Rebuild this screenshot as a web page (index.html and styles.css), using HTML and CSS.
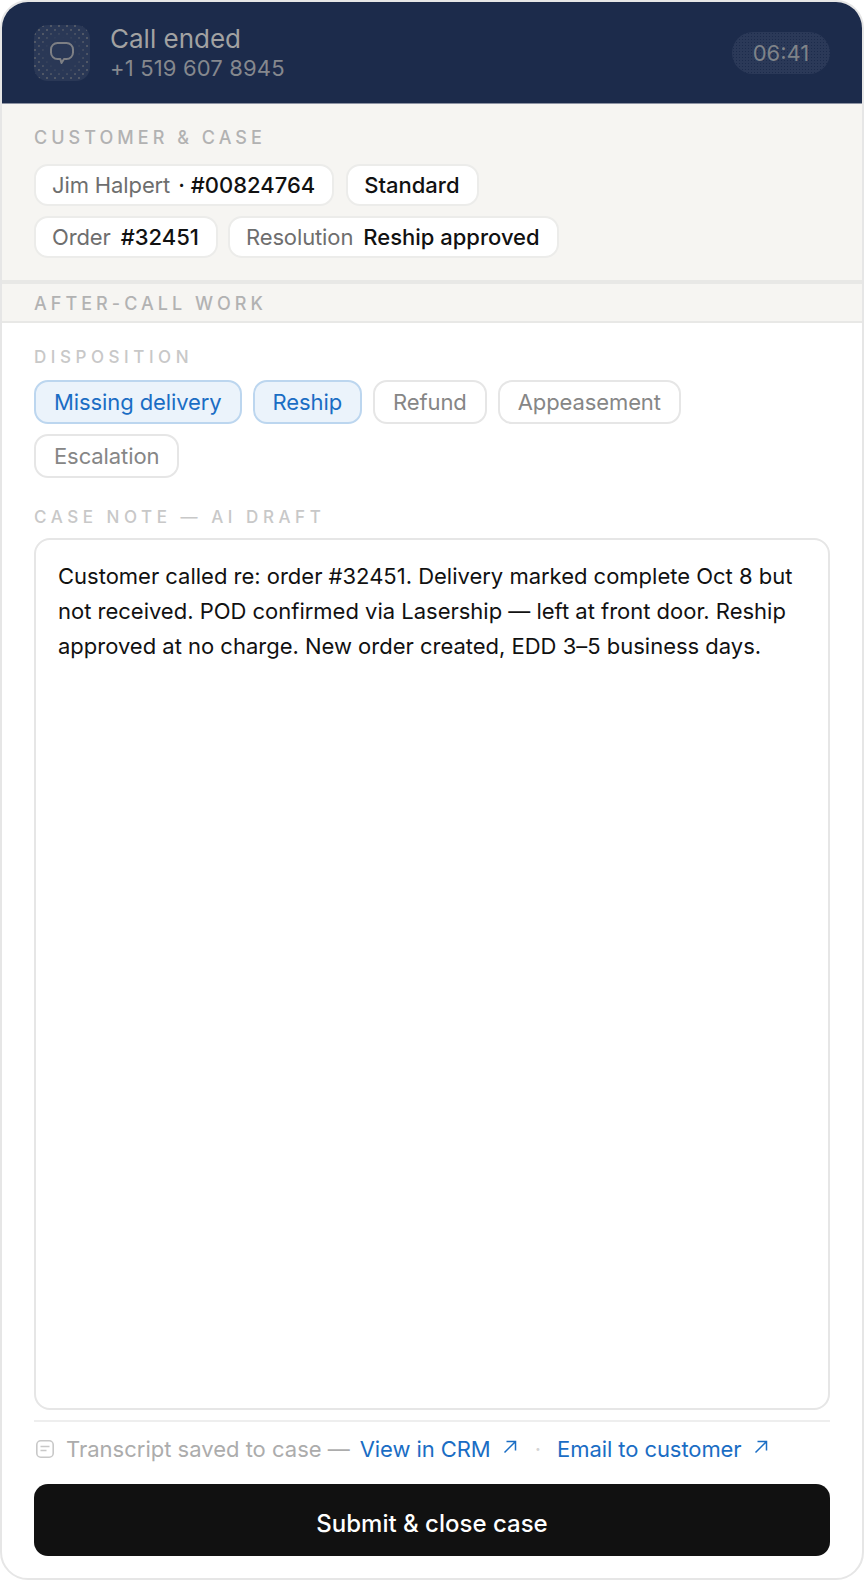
FILE: index.html
```html
<!DOCTYPE html>
<html lang="en">
<head>
    <meta charset="UTF-8">
    <meta name="viewport" content="width=device-width, initial-scale=1.0">
    <title>Call ended</title>
    <link rel="stylesheet" href="styles.css">
</head>
<body>

<div class="panel">
    <header class="call-bar">
        <div class="call-icon">
            <svg width="24" height="24" viewBox="0 0 24 24" fill="none" stroke="#7d7f84" stroke-width="2" stroke-linejoin="round">
                <path d="M7.500 2h9a6.500 6.500 0 0 1 6.500 6.500v3a6.500 6.500 0 0 1-6.500 6.500H14l-2.500 4-1.200-4H7.500A6.500 6.500 0 0 1 1 11.500v-3A6.500 6.500 0 0 1 7.500 2z"/>
            </svg>
        </div>
        <div class="call-info">
            <div class="call-title">Call ended</div>
            <div class="call-phone">+1 519 607 8945</div>
        </div>
        <div class="call-timer">06:41</div>
    </header>

    <section class="case-info">
        <div class="section-label">CUSTOMER &amp; CASE</div>
        <div class="tag-row">
            <span class="tag tag-tight">Jim Halpert <b>· #00824764</b></span>
            <span class="tag"><b>Standard</b></span>
        </div>
        <div class="tag-row tag-row-close">
            <span class="tag">Order <b>#32451</b></span>
            <span class="tag">Resolution <b>Reship approved</b></span>
        </div>
    </section>

    <div class="acw-bar">
        <div class="section-label">AFTER-CALL WORK</div>
    </div>

    <main class="acw">
        <div class="field-label">DISPOSITION</div>
        <div class="chips">
            <button class="chip active">Missing delivery</button>
            <button class="chip active">Reship</button>
            <button class="chip">Refund</button>
            <button class="chip">Appeasement</button>
            <button class="chip">Escalation</button>
        </div>

        <div class="field-label note-label">CASE NOTE — AI DRAFT</div>
        <div class="note">Customer called re: order #32451. Delivery marked complete Oct 8 but not received. POD confirmed via Lasership — left at front door. Reship approved at no charge. New order created, EDD 3–5 business days.</div>

        <div class="saved-row">
            <svg class="saved-icon" width="18" height="18" viewBox="0 0 18 18" fill="none" stroke="#c8c8c8" stroke-width="1.600">
                <rect x="0.800" y="0.800" width="16.400" height="16.400" rx="4"/>
                <path d="M4.500 6.500h9M4.500 10.500h6"/>
            </svg>
            <span class="saved-text">Transcript saved to case —</span>
            <a class="link" href="#">View in CRM
                <svg width="14" height="14" viewBox="0 0 14 14" fill="none" stroke="#1a6dc4" stroke-width="1.500"><path d="M1.500 12.500L12.500 1.500M3.500 1.500h9v9"/></svg>
            </a>
            <span class="link-sep">·</span>
            <a class="link" href="#">Email to customer
                <svg width="14" height="14" viewBox="0 0 14 14" fill="none" stroke="#1a6dc4" stroke-width="1.500"><path d="M1.500 12.500L12.500 1.500M3.500 1.500h9v9"/></svg>
            </a>
        </div>

        <button class="submit">Submit &amp; close case</button>
    </main>
</div>

</body>
</html>
```

FILE: styles.css
```css
* {
    box-sizing: border-box;
}

body {
    margin: 0;
    background-color: #fff;
    font-family: Inter, "Liberation Sans", sans-serif;
}

.panel {
    width: 864px;
    height: 1580px;
    display: flex;
    flex-direction: column;
    border: 2px solid #e6e6e6;
    border-radius: 28px;
    overflow: hidden;
    background-color: #fff;
}

.call-bar {
    height: 102px;
    flex-shrink: 0;
    display: flex;
    align-items: center;
    padding: 0 32px;
    background-color: #1c2b4b;
    border-bottom: 1px solid #8d93a3;
}

.call-icon {
    width: 56px;
    height: 56px;
    display: flex;
    align-items: center;
    justify-content: center;
    border-radius: 14px;
    background-color: #2a3856;
    background-image:
        radial-gradient(circle, #2a3856 38%, rgba(42, 56, 86, 0) 66%),
        radial-gradient(circle, #5f636c 0.6px, rgba(95, 99, 108, 0) 1px),
        radial-gradient(circle, #5f636c 0.6px, rgba(95, 99, 108, 0) 1px);
    background-size: 100% 100%, 8px 8px, 8px 8px;
    background-position: 0 0, 1px 1px, 5px 5px;
}

.call-info {
    margin-left: 20px;
    flex: 1;
}

.call-title {
    font-size: 26px;
    line-height: 30px;
    color: #a2a2a2;
}

.call-phone {
    font-size: 22px;
    line-height: 28px;
    letter-spacing: 0.150px;
    color: #85888e;
}

.call-timer {
    width: 98px;
    height: 42px;
    line-height: 42px;
    text-align: center;
    border-radius: 21px;
    font-size: 22px;
    color: #7f8389;
    background-color: #2b3958;
    background-image: radial-gradient(circle, #1c2b4b 0.5px, rgba(28, 43, 75, 0) 0.8px);
    background-size: 3px 3px;
}

.case-info {
    height: 180px;
    flex-shrink: 0;
    padding: 23px 32px 0;
    background-color: #f6f5f2;
    border-bottom: 4px solid #e8e8e6;
}

.section-label {
    font-size: 18px;
    line-height: 22px;
    font-weight: 500;
    letter-spacing: 4.030px;
    color: #b2b2b2;
}

.tag-row {
    display: flex;
    gap: 12px;
    margin-top: 10px;
}

.tag-row-close {
    gap: 10px;
}

.section-label + .tag-row {
    margin-top: 15px;
}

.tag {
    height: 42px;
    display: inline-flex;
    align-items: center;
    gap: 10px;
    padding: 0 17px 0 16px;
    background-color: #fff;
    border: 2px solid #ececea;
    border-radius: 14px;
    font-size: 22px;
    letter-spacing: -0.120px;
    color: #6e6e6e;
}

.tag-tight {
    gap: 8px;
}

.tag b {
    font-weight: 500;
    letter-spacing: 0;
    color: #111;
}

.acw-bar {
    height: 39px;
    flex-shrink: 0;
    padding: 9px 32px 0;
    background-color: #f6f5f2;
    border-bottom: 2px solid #e8e8e6;
}

.acw {
    flex: 1;
    min-height: 0;
    display: flex;
    flex-direction: column;
    padding: 23px 32px 0;
}

.field-label {
    font-size: 17px;
    line-height: 22px;
    font-weight: 500;
    letter-spacing: 4.550px;
    color: #c8c8c8;
}

.chips {
    display: flex;
    flex-wrap: wrap;
    gap: 10px 11px;
    margin-top: 12px;
}

.chip {
    height: 44px;
    padding: 0 18px;
    background-color: #fff;
    border: 2px solid #e6e6e6;
    border-radius: 14px;
    font-family: inherit;
    font-size: 22px;
    letter-spacing: -0.100px;
    color: #868686;
}

.chip.active {
    background-color: #ebf3fb;
    border-color: #bcd6ef;
    color: #1a6dc4;
}

.note-label {
    margin-top: 28px;
}

.note {
    height: 872px;
    flex-shrink: 0;
    margin-top: 10px;
    padding: 19px 22px;
    border: 2px solid #e6e6e6;
    border-radius: 16px;
    font-size: 22px;
    line-height: 35.200px;
    letter-spacing: -0.010px;
    color: #111;
}

.saved-row {
    display: flex;
    align-items: center;
    height: 56px;
    margin-top: 10px;
    border-top: 2px solid #eeeeee;
    font-size: 22px;
}

.saved-icon {
    margin: 0 12px 0 2px;
}

.saved-text {
    color: #acacac;
}

.link {
    margin-left: 10px;
    letter-spacing: -0.080px;
    color: #1a6dc4;
    text-decoration: none;
}

.link svg {
    margin-left: 6px;
    vertical-align: 3px;
}

.link-sep {
    margin: 0 6px 0 18px;
    color: #d4d4d4;
}

.submit {
    height: 72px;
    flex-shrink: 0;
    margin-top: 8px;
    padding-top: 7px;
    border: none;
    border-radius: 14px;
    background-color: #111;
    font-family: inherit;
    font-size: 24px;
    font-weight: 500;
    color: #fff;
}
```
